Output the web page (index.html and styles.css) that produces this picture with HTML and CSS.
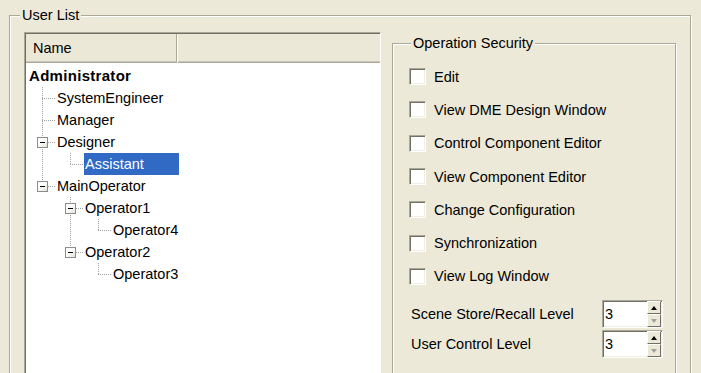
FILE: index.html
```html
<!DOCTYPE html>
<html lang="en">
<head>
	<meta charset="UTF-8">
	<title>User List</title>
	<link rel="stylesheet" href="styles.css">
</head>
<body>
<div class="dialog">
	<fieldset class="group users">
		<legend>User List</legend>
		<div class="users-body">

			<!-- user tree -->
			<div class="tree">
				<div class="tree-head">
					<div class="col col-name">Name</div>
					<div class="col col-rest"></div>
				</div>
				<ul class="tree-list">
					<li class="node root"><span class="label">Administrator</span></li>
					<li class="node"><span class="cell tee"></span><span class="label">SystemEngineer</span></li>
					<li class="node"><span class="cell tee"></span><span class="label">Manager</span></li>
					<li class="node"><span class="cell tee"><span class="toggle"></span></span><span class="label">Designer</span></li>
					<li class="node"><span class="cell pipe"></span><span class="cell ell"></span><span class="label sel">Assistant</span></li>
					<li class="node"><span class="cell ell"><span class="toggle"></span></span><span class="label">MainOperator</span></li>
					<li class="node"><span class="cell"></span><span class="cell tee"><span class="toggle"></span></span><span class="label">Operator1</span></li>
					<li class="node"><span class="cell"></span><span class="cell pipe"></span><span class="cell ell"></span><span class="label">Operator4</span></li>
					<li class="node"><span class="cell"></span><span class="cell ell"><span class="toggle"></span></span><span class="label">Operator2</span></li>
					<li class="node"><span class="cell"></span><span class="cell"></span><span class="cell ell"></span><span class="label">Operator3</span></li>
				</ul>
			</div>

			<!-- permissions -->
			<fieldset class="group opsec">
				<legend>Operation Security</legend>
				<label class="check"><span class="box"></span>Edit</label>
				<label class="check"><span class="box"></span>View DME Design Window</label>
				<label class="check"><span class="box"></span>Control Component Editor</label>
				<label class="check"><span class="box"></span>View Component Editor</label>
				<label class="check"><span class="box"></span>Change Configuration</label>
				<label class="check"><span class="box"></span>Synchronization</label>
				<label class="check"><span class="box"></span>View Log Window</label>

				<div class="levels">
					<div class="level">
						<span class="level-name">Scene Store/Recall Level</span>
						<div class="spin"><span class="val">3</span><span class="arrows"><span class="arrow up"></span><span class="arrow down"></span></span></div>
					</div>
					<div class="level">
						<span class="level-name">User Control Level</span>
						<div class="spin"><span class="val">3</span><span class="arrows"><span class="arrow up"></span><span class="arrow down"></span></span></div>
					</div>
				</div>
			</fieldset>

		</div>
	</fieldset>
</div>
</body>
</html>
```

FILE: styles.css
```css
body{
	margin: 0;
	height: 373px;
	overflow: hidden;
	background: #ece9d8;
	font: 14.5px "Liberation Sans", Arial, sans-serif;
	color: #000;
}

.dialog{
	padding: 7px 10px 0 9px;
}

/* etched group boxes */
.group{
	margin: 0;
	padding: 0;
	min-width: 0;
	border: 1px solid #aca899;
	box-shadow: inset 1px 1px 0 #fff, 1px 1px 0 #fff;
}

.group legend{
	padding: 0 2px;
	line-height: 16px;
	background: #ece9d8;
}

.users legend{
	margin-left: 10px;
}

.users-body{
	display: flex;
	align-items: flex-start;
	padding: 9px 14px 0 14px;
	height: 400px;
}

/* tree */
.tree{
	width: 357px;
	height: 380px;
	box-sizing: border-box;
	background: #fff;
	border: 1px solid;
	border-color: #aca899 #fff #fff #aca899;
	box-shadow: inset 1px 1px 0 #716f64;
	padding: 1px 0 0 1px;
}

.tree-head{
	display: flex;
	height: 29px;
	box-sizing: border-box;
	background: #ebe8d7;
	box-shadow: inset 0 -1px 0 #aca899, inset 0 -2px 0 #cbc7b8;
}

.col{
	line-height: 28px;
}

.col-name{
	width: 151px;
	box-sizing: border-box;
	padding-left: 7px;
	border-right: 1px solid #aca899;
}

.col-rest{
	flex: 1;
	border-left: 1px solid #fff;
}

.tree-list{
	list-style: none;
	margin: 0;
	padding: 2px 0 0 2px;
}

.node{
	display: flex;
	align-items: center;
	height: 22px;
}

.label{
	padding: 0 1px;
	line-height: 22px;
	white-space: nowrap;
}

.root .label{
	font-weight: bold;
	font-size: 15px;
	letter-spacing: 0.3px;
}

.label.sel{
	width: 95px;
	box-sizing: border-box;
	background: #316ac5;
	color: #fff;
}

.cell{
	flex: none;
	display: flex;
	align-items: center;
	width: 28px;
	height: 22px;
	background-repeat: no-repeat;
}

.pipe{
	background-image: repeating-linear-gradient(to bottom, #a0a0a0 0 1px, transparent 1px 2px);
	background-size: 1px 22px;
	background-position: 14px 0;
}

.tee, .ell{
	background-image:
		repeating-linear-gradient(to bottom, #a0a0a0 0 1px, transparent 1px 2px),
		repeating-linear-gradient(to right, #a0a0a0 0 1px, transparent 1px 2px);
	background-size: 1px 22px, 14px 1px;
	background-position: 14px 0, 14px 11px;
}

.ell{
	background-size: 1px 11px, 14px 1px;
}

.toggle{
	display: flex;
	align-items: center;
	justify-content: center;
	width: 11px;
	height: 11px;
	box-sizing: border-box;
	margin-left: 9px;
	border: 1px solid #8c8c8c;
	background: linear-gradient(135deg, #fff 40%, #e4e1d6);
}

.toggle::before{
	content: "";
	width: 5px;
	height: 1px;
	background: #000;
}

/* operation security */
.opsec{
	width: 284px;
	height: 360px;
	box-sizing: border-box;
	margin: 3px 0 0 11px;
	padding: 9px 0 0 16px;
}

.opsec legend{
	margin-left: 2px;
}

.check{
	display: flex;
	align-items: center;
	gap: 8px;
	height: 33.3px;
}

.box{
	width: 17px;
	height: 17px;
	box-sizing: border-box;
	background: #fff;
	border: 1px solid;
	border-color: #aca899 #fff #fff #aca899;
	box-shadow: inset 1px 1px 0 #716f64, inset -1px -1px 0 #f1efe2;
}

.levels{
	margin-top: 6px;
}

.level{
	display: flex;
	align-items: center;
	height: 30px;
}

.level-name{
	width: 193px;
	box-sizing: border-box;
	padding-left: 2px;
}

.spin{
	display: flex;
	align-items: center;
	justify-content: space-between;
	width: 61px;
	height: 28px;
	box-sizing: border-box;
	padding: 0 1px 0 2px;
	background: #fff;
	border: 1px solid;
	border-color: #aca899 #fff #fff #aca899;
	box-shadow: inset 1px 1px 0 #716f64, inset -1px -1px 0 #f1efe2;
}

.arrows{
	display: flex;
	flex-direction: column;
}

.arrow{
	display: flex;
	align-items: center;
	justify-content: center;
	width: 14px;
	height: 13px;
	box-sizing: border-box;
	background: #ece9d8;
	border: 1px solid;
	border-color: #fff #716f64 #716f64 #fff;
}

.arrow::before{
	content: "";
	border-left: 3px solid transparent;
	border-right: 3px solid transparent;
}

.up::before{
	border-bottom: 4px solid #000;
}

.down::before{
	border-top: 4px solid #a0a0a0;
}
```
